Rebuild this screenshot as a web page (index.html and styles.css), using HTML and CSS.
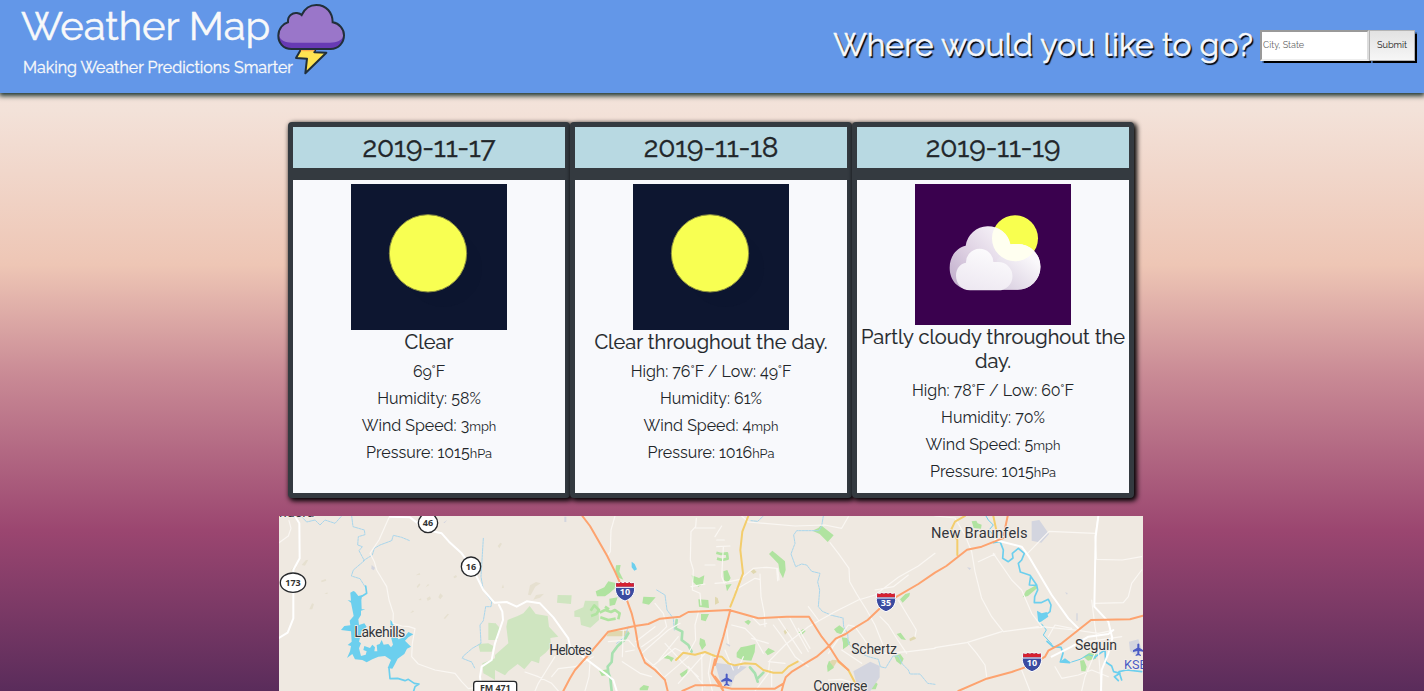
FILE: index.html
```html
<!DOCTYPE html>
<html lang="en">
<head>
<meta charset="utf-8">
<title>Weather Map</title>
<link rel="stylesheet" href="styles.css">
</head>
<body>
<header class="top">
  <div class="brand">
    <h1>Weather Map</h1>
    <p>Making Weather Predictions Smarter</p>
    <svg class="logo" viewBox="816 0 234 234">
      <path d="M904 146L888 174L921 176L916 220L979 158L943 157L947 146Z" fill="#fee452" stroke="#212f3a" stroke-width="6" stroke-linejoin="round"/>
      <path d="M905 147H945L943 154H902Z" fill="#fbb04f"/>
      <path d="M875 147C848 147 835 127 835 107C835 86 850 70 864 67C862 48 878 37 891 39C897 40 902 42 905 45C914 26 930 15 949 15C979 15 998 38 998 67C1018 70 1032 87 1032 106C1032 128 1016 147 992 147Z" fill="#9a76c9"/>
      <path d="M836 106C842 122 856 128 876 128H990C1010 128 1026 122 1031 106C1032 128 1016 147 992 147H875C848 147 835 127 836 106Z" fill="#673ab4"/>
      <path d="M875 147C848 147 835 127 835 107C835 86 850 70 864 67C862 48 878 37 891 39C897 40 902 42 905 45C914 26 930 15 949 15C979 15 998 38 998 67C1018 70 1032 87 1032 106C1032 128 1016 147 992 147Z" fill="none" stroke="#212f3a" stroke-width="6"/>
    </svg>
  </div>
  <form class="search">
    <label for="place">Where would you like to go?</label>
    <input id="place" type="text" placeholder="City, State"><button type="button">Submit</button>
  </form>
</header>
<main>
  <section class="cards">
    <article class="card">
      <h2>2019-11-17</h2>
      <div class="card-body">
        <svg class="sky" viewBox="213 222 468 438"><rect x="213" y="222" width="468" height="438" fill="#0d1630"/><circle cx="490" cy="475" r="116" fill="#0a122b" opacity=".25"/><circle cx="444" cy="430" r="116" fill="#f8ff52" stroke="#8d9140" stroke-width="3"/></svg>
        <h3>Clear</h3>
        <p>69°F</p><p>Humidity: 58%</p><p>Wind Speed: 3<small>mph</small></p><p>Pressure: 1015<small>hPa</small></p>
      </div>
    </article>
    <article class="card">
      <h2>2019-11-18</h2>
      <div class="card-body">
        <svg class="sky" viewBox="213 222 468 438"><rect x="213" y="222" width="468" height="438" fill="#0d1630"/><circle cx="490" cy="475" r="116" fill="#0a122b" opacity=".25"/><circle cx="444" cy="430" r="116" fill="#f8ff52" stroke="#8d9140" stroke-width="3"/></svg>
        <h3>Clear throughout the day.</h3>
        <p>High: 76°F / Low: 49°F</p><p>Humidity: 61%</p><p>Wind Speed: 4<small>mph</small></p><p>Pressure: 1016<small>hPa</small></p>
      </div>
    </article>
    <article class="card">
      <h2>2019-11-19</h2>
      <div class="card-body">
        <svg class="sky sky-cloudy" viewBox="225 222 468 423">
          <defs>
            <linearGradient id="big" gradientUnits="userSpaceOnUse" x1="335" y1="500" x2="470" y2="370"><stop offset="0" stop-color="#c5b3cf"/><stop offset=".45" stop-color="#ddd0e2"/><stop offset="1" stop-color="#f3eef5"/></linearGradient>
            <linearGradient id="side" gradientUnits="userSpaceOnUse" x1="490" y1="540" x2="570" y2="440"><stop offset="0" stop-color="#d9cfe0"/><stop offset="1" stop-color="#faf8fb"/></linearGradient>
            <linearGradient id="small" x1="0" y1="1" x2=".4" y2="0"><stop offset="0" stop-color="#ece6f0"/><stop offset="1" stop-color="#fbfafc"/></linearGradient>
            <clipPath id="cloudClip"><path d="M395 539C350 539 329 508 329 473C329 437 352 412 377 407A68 68 0 0 1 511 403Q521 401 533 402A68.500 68.500 0 0 1 533 539Z"/></clipPath>
          </defs>
          <rect x="225" y="222" width="468" height="423" fill="#3a014e"/>
          <circle cx="525" cy="385" r="69" fill="#f8ff4f"/>
          <path d="M395 539C350 539 329 508 329 473C329 437 352 412 377 407A68 68 0 0 1 511 403Q521 401 533 402A68.500 68.500 0 0 1 533 539Z" fill="url(#big)"/>
          <g clip-path="url(#cloudClip)"><path d="M480 539L470 450L520 400H610V545H480Z" fill="url(#side)"/><circle cx="525" cy="385" r="69" fill="#fffff0"/></g>
          <path d="M390 541C365 541 348 520 348 497C348 475 362 460 378 458A41 41 0 0 1 460 456H475A42.500 42.500 0 0 1 475 541Z" fill="url(#small)"/>
        </svg>
        <h3>Partly cloudy throughout the day.</h3>
        <p>High: 78°F / Low: 60°F</p><p>Humidity: 70%</p><p>Wind Speed: 5<small>mph</small></p><p>Pressure: 1015<small>hPa</small></p>
      </div>
    </article>
  </section>

  <svg class="map" viewBox="12 18 2592 525">
    <defs>
      <g id="interstate">
        <path d="M-27-26Q-18-22-13-27Q-6-23 0-27Q6-23 13-27Q18-22 27-26L29-10C30 10 18 24 0 30C-18 24-30 10-29-10Z" fill="#3b4ba0" stroke="#fff" stroke-width="3"/>
        <path d="M-26-25Q-18-20-13-26Q-6-21 0-26Q6-21 13-26Q18-20 26-25L27-13H-27Z" fill="#d6202f"/>
        <path d="M-28-11H28" stroke="#fff" stroke-width="3"/>
      </g>
      <path id="plane" d="M-3-15Q0-20 3-15V-5L16 3V8L3 5V13L8 17V20L0 18L-8 20V17L-3 13V5L-16 8V3L-3-5Z" fill="#4a5bc4"/>
    </defs>
    <rect x="12" y="18" width="2592" height="525" fill="#efe9e1"/>

    <!-- faint relief -->
    <g class="relief">
      <path d="M80 165l12-14 8-2-10 18zM103 298l8-18 6 2-5 16zM48 180l12-12 5 3-12 14zM138 212l14-5 2 5-14 5zM425 230l8-10 3 4-8 10zM422 196l12-7 2 5zM455 265l10-6 3 8-10 6zM490 262l6-12 8 8-8 10zM535 200l8-5 3 6-8 4zM506 325l12-14 4 2-12 14zM405 310l9-9 3 4zM430 270l8-5 1 6zM148 252l9-5 1 5zM452 232l7-10 4 3zM668 108l8-10 5 3-8 14zM765 226l18-10 14 4-16 10-14 26-8-2zM783 255l24-4-12 12-20 6zM680 235l4-12 3 10z"/>
    </g>

    <!-- parks -->
    <g class="woods">
      <path d="M640 338L660 340L672 352L668 390H640ZM610 402L640 400L655 408L650 425L615 425ZM622 460L660 445V510L640 498L625 490Z"/>
      <path d="M698 330L728 318L745 310L764 288L782 312L818 318L822 350L850 380L826 384L828 410L812 428L795 442L792 460L770 452L748 478L728 462L700 484L690 496L660 480V435L700 400L694 350ZM660 338L674 354L660 392ZM848 255L890 256L888 282L846 278ZM898 303L925 292L930 272L970 273L972 330L946 353L918 345L915 322L898 320Z"/>
    </g>
    <g class="park">
      <path d="M1023 166l14-1-4 20 12 24-14-6-10-20zM962 244l26-12 12-18 22 5 2 12-20 18-14 10-24 0zM1003 266l25-4-8 22-16 4zM1105 260l37 2-20 22-20-4zM1250 196l22 8 16-8-4 26-14 8-16-14zM1270 268l30 2 2 24-30-4zM1278 312l24 0-10 22-14-4zM1275 384l14 6 4 16-12 14-8-18zM1214 492l24-16-2 16-16 10zM1165 444l12-8 20 8-8 12-6-8zM972 482l26-4-4 18-14 2zM1094 535l12-10 16 4-4 12h-24z"/>
      <path d="M1345 184l12-4 10 24-8 14-12-8zM1352 224l18-2-14 22zM1482 132l10-10 12 10 26 22 2 26-8 25-10-20-4-24zM1612 62l18-8 8-8 38 30-18 20-24-24zM1408 335l12-6 8 6-8 10zM1385 428l12-16 20-4 24-6-2 24-10 26-26-2-18-8zM1470 426l10-12 20 10-14 8-8 4zM1570 368l14-11 8 6-12 12zM1677 358l16-12 14 10-4 18-18-6zM1700 382l16 2 10 14-8 10-14 10 0-20zM1662 452l8 6 8-6-2 22-18 12-2-18zM1875 268l16-16 14-4-2 10-20 20zM1865 372l12-4 16 22-14-2zM1858 438l18-6 10 14-8 18-14-10zM1780 522l18-10 10 10-6 16h-22z"/>
      <path d="M2090 34l14-2 4 8 12 4-2 12-22-2zM2243 262l10-20 30-16 4 8-28 24zM2425 440l18-12 22 4-2 14-24 6zM2415 452l12-2 8 20-4 14h-12z"/>
    </g>
    <path class="park-edge" d="M947 302L958 286L972 300L964 312L948 318M974 308L990 300L1008 306L1020 300L1034 310L1030 328M976 322L1000 330L1022 326M990 290L1002 298M1324 128L1338 132L1356 130L1358 146L1342 150L1326 146"/>
    <g class="bare"><path d="M1004 363h58l-4 16h-50l-14 0zM1320 260l8 4 4 14-12 6zM1427 184l10-6 8 8-10 6zM1526 364l8-8 6 8-10 10zM1903 386l16-8 4 8-18 8zM1664 455l8-6 16 2-12 20z"/></g>
    <g class="airfield"><path d="M1320 458L1416 470L1380 498L1368 530L1336 516ZM1735 484L1786 455L1814 468V502L1786 543H1750ZM1354 400l12 6-2 4-12-8zM2270 34L2293 30L2322 72L2299 98L2270 92ZM2562 395L2590 388L2601 420L2585 436L2565 424ZM2404 310h4v22h-4zM2370 247l8 2-2 5zM2076 172l12 2-4 6zM290 165l10 8-3 8-8-4zM505 38l12-9-8 10zM868 20h6v16h-6z"/></g>

    <!-- creeks -->
    <g class="creek">
      <path d="M60 22L80 20L95 36L120 30L135 45L150 30L180 40L200 18M230 18L234 50L268 60L270 74L250 80L248 105L262 110L252 122L268 152L235 180L229 198L255 206L270 230M265 152L292 135L298 115L315 105L350 92L355 76L380 82L404 92M625 85L618 200L625 240L650 275L648 290L632 290L625 332L615 345L618 400L592 415L565 438L562 445L590 456L600 476"/>
      <path d="M1145 240L1170 255L1176 300L1195 325L1198 360M1060 350L1050 380L1025 400M1428 32L1448 34L1465 18M1645 18L1640 48L1632 62L1565 62L1556 75L1560 100L1548 132L1562 170L1580 162L1595 165L1610 184L1635 190L1628 216L1634 240L1630 290L1642 304L1670 316L1704 324L1706 350L1718 370L1720 400L1740 422L1780 440L1810 448L1816 470L1832 474L1854 438L1870 438L1882 462L1900 480L1905 492L1935 492L1958 520L1980 523"/>
    </g>
    <path class="greenway" d="M1060 370L1048 390L1028 408L1012 430L1010 456L998 470L1000 488L1006 505L1010 543M1205 330L1202 355L1222 365L1220 390L1240 405L1250 425M1425 472L1440 490L1448 515M1448 505L1465 488"/>

    <!-- lakes and rivers -->
    <g class="water">
      <path d="M226 248L235 243L240 245L250 258L262 255L259 270L260 298L271 298L258 302V315L250 328L252 345L268 340L275 350L260 364L252 395L258 400L252 415L258 438L272 434L275 424L265 420L268 408L285 414L292 404L300 412L298 424L307 424L305 405L314 402L320 390L326 404L340 402L348 412L354 404L348 382V365L346 330L355 340L358 364L366 376L370 388L388 382L400 366L415 373L400 382L390 392L408 410L396 416L388 432L368 446L360 462L352 476L338 474L348 450L330 438L310 440L292 448L275 457L262 450L240 448L232 432L216 444L225 424L228 408L218 405L230 395L228 364L198 360L208 348L226 346L224 332L236 318L232 298L228 278L218 270L228 272Z"/>
      <path d="M1070 155L1079 162L1086 178L1078 182L1070 172ZM2286 302L2300 310L2315 306L2320 320L2298 335L2290 338L2288 320ZM2354 456L2370 445L2388 458Z"/>
    </g>
    <g class="river">
      <path d="M272 228L275 250L262 258M342 474L345 506L368 505L390 512L400 508L418 520L432 522L420 530L416 543"/>
      <path d="M2155 98L2175 94L2185 120L2183 145L2200 155L2214 144L2212 130L2230 115L2248 130L2240 150L2230 160L2236 186L2265 196L2285 225L2288 240L2279 260L2278 278L2298 278L2320 268L2328 285L2325 305L2302 322M2267 198L2263 225L2285 226"/>
      <path d="M2316 394L2334 410L2358 412L2364 430L2356 456L2384 458M2454 446L2475 430L2490 420L2492 456L2510 468L2516 485L2535 490L2518 500L2530 512M2540 510L2532 485L2555 480L2600 485"/>
      <path class="thin" d="M2133 18L2140 30L2155 45L2142 60L2158 78M2300 342L2314 360L2305 375L2330 402M2390 456L2415 448L2440 434L2460 440"/>
    </g>

    <!-- local roads -->
    <g class="local">
      <path d="M12 98L40 78L48 55L42 32M344 18L312 90L285 130L298 155L305 180L335 230L342 270L355 310L354 340L380 348L402 350L420 356L412 400L410 440L430 462L480 480L540 490L560 515L580 536L620 530"/>
      <path d="M1020 18L1008 60L1006 125L995 140M1264 25L1262 50L1248 65L1246 150L1255 180L1252 240L1275 250L1278 285M1262 54H1320M1248 230L1290 222M1290 165H1320M1272 300L1260 345L1262 390L1240 430"/>
      <path d="M750 486L790 500L830 520L850 543M955 440L900 470L850 476L830 500M840 440L815 480L790 520L780 543M945 455L942 500L930 543M1000 395L1060 390L1078 410M1045 360L1042 440M1042 455L1095 490L1130 500M1052 425L1078 420M1140 280L1165 310L1175 350L1150 375L1100 410M1082 395L1140 350M1100 430L1180 360L1215 340M1170 400L1225 460L1270 500M1152 450L1210 380M1130 470L1200 415L1230 430M1170 500L1240 440M1210 520L1290 430M1240 470L1290 530M1280 430L1282 543M1310 430L1300 490L1312 543M1105 440L1145 475L1175 515"/>
      <path d="M1320 80L1340 48M1320 220L1348 218L1395 208L1435 175L1475 172L1505 175L1508 212M1345 112L1340 200L1348 220M1325 110L1365 108M1455 192L1458 260L1468 310L1470 350M1380 240L1440 205L1454 208M1508 175L1512 210M1370 345L1410 355L1440 385L1465 430M1355 355L1360 400M1435 325L1455 345L1475 340M1510 325L1540 370L1580 430M1545 325L1600 425M1570 355L1605 415M1495 345L1525 385L1560 440L1600 470M1430 385L1480 400M1405 440L1390 475M1350 420L1375 480"/>
      <path d="M1440 543L1480 490L1484 452L1530 405L1600 350L1680 305L1750 270L1800 255L1870 202L1930 168L1980 130M1480 455L1530 460M1490 480V530M1665 98L1690 130L1722 175L1724 215L1745 252L1775 300L1800 345L1820 395L1825 410M1660 430L1720 345L1740 350L1790 420M1815 320L1840 345L1868 390L1895 430M1870 270L1924 360L1920 380M1800 240L1855 230L1900 195M1325 90L1348 90M1600 290L1630 330M1700 420L1760 460M1400 18L1420 36L1560 48L1650 45L1700 55L1720 20M1820 430L1900 425L1980 415M1660 510L1700 508L1740 520"/>
      <path d="M1980 18L2040 24L2070 75L2090 125L2100 185L2120 265L2150 320L2185 365L2260 355L2300 352M1980 413L2075 398L2180 365M2155 130L2210 210L2240 240L2270 310L2300 350M2080 400L2105 430L2130 465L2135 500M2255 133L2322 64L2460 70M2470 18L2460 80L2465 148L2542 150L2600 140M2600 180L2570 220L2560 260L2545 278L2460 280M2240 480L2265 543M2110 155L2160 132M2185 365L2290 350M2450 270L2460 350L2470 420L2480 543M2300 350L2400 360L2470 370L2510 362M2340 470L2360 505L2410 495L2450 480L2500 500M2410 400L2440 395L2540 380M2460 430L2430 500L2420 543M2320 380L2340 345L2390 355"/>
    </g>
    <g class="road">
      <path d="M62 22L73 40L74 145L55 180V325L38 368L12 384M345 20L405 22L455 60L500 70L522 95L560 130L595 180L625 240L658 278L695 276L725 290L755 274L795 280L835 322L880 385L885 410L930 445L990 490L1015 510L1025 543M672 285L682 305L684 330L660 400L650 450L620 470L615 500L620 543"/>
      <path d="M2160 90L2240 110L2262 140L2330 255L2380 325L2410 355M2470 18L2462 80L2458 290L2500 335L2512 385L2500 430L2480 480L2478 543M2330 440L2390 410L2440 380L2500 372L2515 360"/>
    </g>
    <g class="primary">
      <path d="M1203 450L1225 428L1260 434L1290 426L1320 438L1340 440L1360 460L1380 466L1410 460L1442 462L1465 480L1495 488L1522 488L1540 470L1568 455M1420 18L1402 65L1396 120L1404 190L1378 260L1366 290M1690 455L1720 480L1742 522M2070 18L2040 35L2028 60L2047 90V135M2155 18L2166 70"/>
    </g>
    <g class="motorway">
      <path d="M922 18L945 48L995 135L1020 185L1045 240L1070 310L1080 350L1090 410L1110 458L1140 480L1170 510L1178 543M865 543L885 505L900 480L940 435L1000 365L1080 348L1120 342L1155 326L1215 320L1240 306L1362 300L1450 325L1535 320L1602 320L1640 380L1662 408L1690 452L1720 480M1366 300L1345 380L1320 465M1222 543L1260 526L1320 526L1370 536L1500 536L1526 520L1532 502L1552 484L1600 455L1625 440L1662 408L1682 386L1712 372L1735 356L1778 330L1815 295L1865 260L1930 222L1980 188L2014 168L2076 119L2120 110L2190 82M1520 543L1526 520M2198 18L2186 75M2050 543L2135 506L2210 486L2275 463L2310 440L2320 422L2360 400L2448 330L2565 328L2604 317M1320 448L1310 490L1345 543M1320 500L1336 520L1345 543"/>
    </g>

    <g class="pins">
      <ellipse cx="54" cy="218" rx="38" ry="29"/><circle cx="459" cy="39" r="29"/><circle cx="588" cy="170" r="29"/><rect x="596" y="514" width="129" height="45" rx="8"/>
    </g>
    <use href="#interstate" x="1050" y="243"/><use href="#interstate" x="1833" y="275"/><use href="#interstate" x="2271" y="455"/>
    <use href="#plane" x="1355" y="508"/><use href="#plane" x="2590" y="418"/>
    <g class="shield-text">
      <text x="54" y="228">173</text><text x="459" y="49">46</text><text x="588" y="181">16</text><text x="661" y="543" textLength="92">FM 471</text>
      <g class="white"><text x="1050" y="256">10</text><text x="1833" y="289">35</text><text x="2271" y="468">10</text></g>
    </g>
    <g class="place">
      <text x="12" y="22" textLength="106">ndera</text>
      <text x="238" y="381" textLength="153">Lakehills</text>
      <text x="823" y="434" textLength="128">Helotes</text>
      <text x="1729" y="431" textLength="137">Schertz</text>
      <text x="1615" y="544" textLength="162">Converse</text>
      <text x="1968" y="84" textLength="290" class="city">New Braunfels</text>
      <text x="2400" y="420" textLength="126">Seguin</text>
      <text x="2547" y="477" class="airport">KSEQ</text>
    </g>
  </svg>
</main>
</body>
</html>
```

FILE: styles.css
```css
html { height: 100%; overflow: hidden; }
body {
  margin: 0;
  height: 691px;
  overflow: hidden;
  font-family: Raleway, Lato, sans-serif;
  font-size: 16px;
  line-height: 1.2;
  color: #212529;
  background: linear-gradient(#f4e8e2 0, #f3e2d9 110px, #eec6b5 265px, #c98a95 375px, #9b4670 530px, #5a2c5b 691px);
}
h1, h2, h3, p { margin: 0; font-weight: 400; }

.top {
  display: flex;
  justify-content: space-between;
  box-sizing: border-box;
  height: 93px;
  padding: 0 9px 0 21px;
  background: #6397e8;
  box-shadow: 0 2px 5px 1px #1f3530;
}
.brand { position: relative; color: #f8f9fa; padding-top: 2px; }
.brand h1 { font-size: 40px; line-height: 48px; -webkit-text-stroke: .5px #f8f9fa; }
.brand p { padding: 8px 0 0 2px; line-height: 20px; -webkit-text-stroke: .3px #f8f9fa; }
.logo { position: absolute; left: 251px; top: 0; width: 78px; height: 78px; }
.search { display: flex; align-items: center; height: 90px; }
.search label {
  margin-right: 7px;
  font-size: 32px;
  color: #f8f9fa;
  -webkit-text-stroke: .5px #f8f9fa;
  text-shadow: 1.5px 1.5px 1px #000;
}
.search input, .search button {
  box-sizing: border-box;
  height: 31px;
  font-family: Raleway, Lato, sans-serif;
  border-radius: 0;
  box-shadow: 1.5px 1.5px 1px #000;
}
.search input {
  width: 109px;
  padding: 0 1px;
  font-size: 9px;
  border: 2px solid;
  border-color: #999 #ddd #eee #999;
  background: #fff;
}
.search input::placeholder { color: #666; opacity: 1; }
.search button {
  width: 46px;
  padding: 0 0 2px;
  font-size: 9.200px;
  color: #222;
  border: 1px solid #b4b4b4;
  background: linear-gradient(#e2e2e2, #f6f6f6);
}

main { padding: 29px 2px 0 0; }
.cards { display: flex; justify-content: center; }
.card {
  display: flex;
  flex-direction: column;
  gap: 12px;
  box-sizing: border-box;
  width: 282px;
  height: 376px;
  border: 5px solid #343a40;
  border-radius: 4px;
  background: #343a40;
  box-shadow: 2px 2px 5px 1px #000;
  text-align: center;
}
.card h2 {
  height: 41px;
  font-size: 28px;
  line-height: 42px;
  letter-spacing: -.1px;
  -webkit-text-stroke: .4px #212529;
  background: #b8d9e2;
}
.card-body { flex: 1; padding-top: 4px; background: #f8f9fc; }
.sky { display: block; width: 156px; height: 146px; margin: 0 auto; }
.sky-cloudy { height: 141px; }
.card h3 { margin-bottom: 8px; font-size: 20px; line-height: 24px; -webkit-text-stroke: .2px #212529; }
.card p { height: 19px; margin-bottom: 8px; line-height: 19px; }
.card small { font-size: 80%; line-height: 1; }

.map { display: block; width: 864px; height: 175px; margin: 18px auto 0; }
.relief { fill: #e6e0d0; }
.woods { fill: #cfe5c0; }
.park { fill: #b0e3a0; }
.park-edge { fill: none; stroke: #b0e3a0; stroke-width: 8; stroke-linejoin: round; }
.bare { fill: #e0d8b0; }
.airfield { fill: #d3d5df; }
.creek, .greenway, .river, .local, .road, .primary, .motorway { fill: none; stroke-linejoin: round; stroke-linecap: round; }
.creek { stroke: #a9d6ec; stroke-width: 3; stroke-dasharray: 7 3; }
.greenway { stroke: #a8e0b0; stroke-width: 8; }
.water { fill: #6ccfee; }
.river { stroke: #6ccfee; stroke-width: 5; }
.river .thin { stroke-width: 3; }
.local { stroke: #faf7f3; stroke-width: 3.500; }
.road { stroke: #fff; stroke-width: 6; }
.primary { stroke: #f3cd6c; stroke-width: 6; }
.motorway { stroke: #fda36f; stroke-width: 6; }
.pins { fill: #fff; stroke: #26282b; stroke-width: 4; }
.shield-text { font: 700 27px "Open Sans", sans-serif; text-anchor: middle; fill: #333; }
.shield-text .white { fill: #fff; font-size: 27px; }
.place {
  font: 400 42px Roboto, sans-serif;
  fill: #33363b;
  stroke: #f3eee8;
  stroke-width: 5;
  paint-order: stroke;
}
.place .city { font-size: 44px; }
.place .airport { font-size: 38px; fill: #4a5bc4; }
```
